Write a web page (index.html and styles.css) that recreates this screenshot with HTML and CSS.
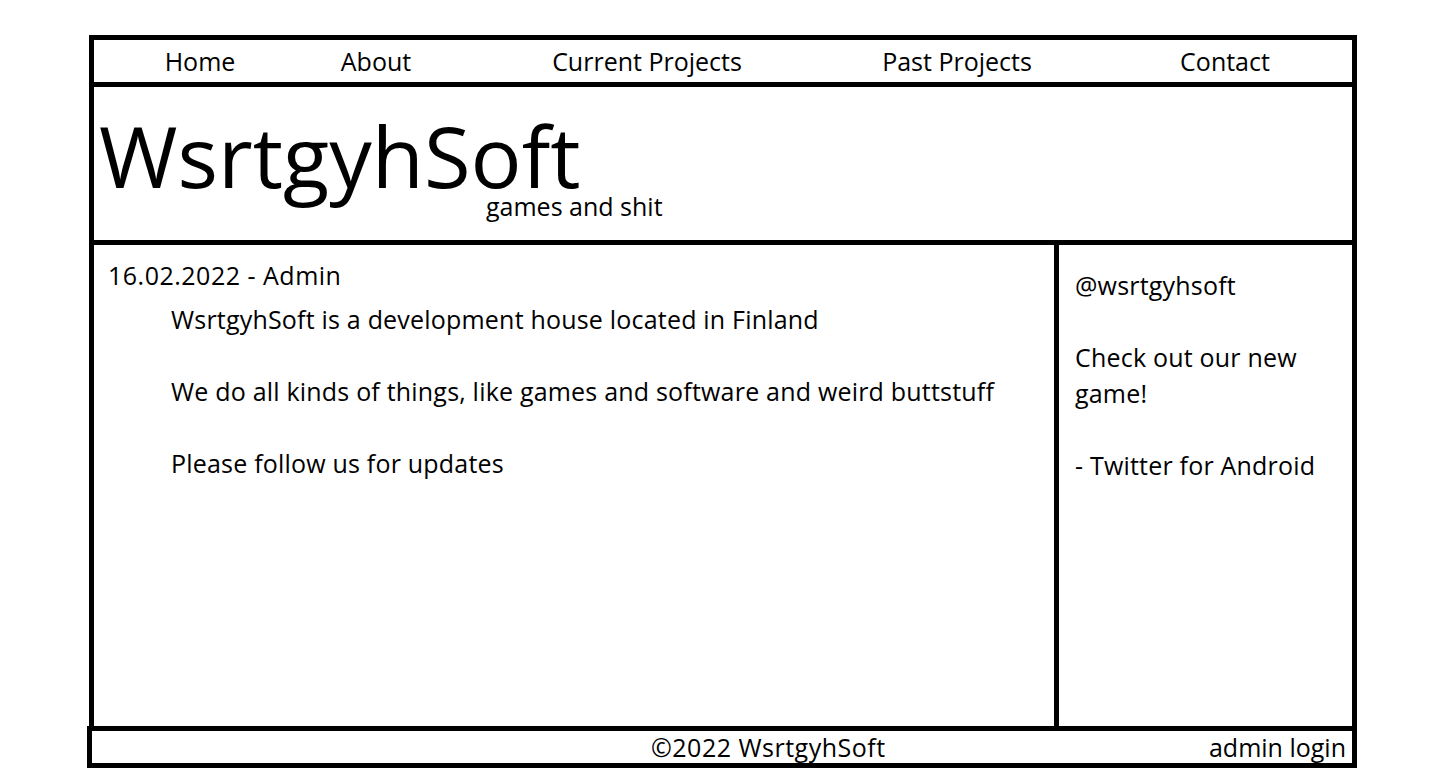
FILE: index.html
```html
<!DOCTYPE html>
<html>
<head>
<meta charset="utf-8">
<title>WsrtgyhSoft</title>
<link rel="stylesheet" href="styles.css">
</head>
<body>
<div class="page">
  <nav class="nav">
    <a class="nav-item" href="#">Home</a>
    <a class="nav-item" href="#">About</a>
    <a class="nav-item" href="#">Current Projects</a>
    <a class="nav-item" href="#">Past Projects</a>
    <a class="nav-item last" href="#">Contact</a>
  </nav>
  <header class="header">
    <h1 class="title">WsrtgyhSoft</h1>
    <div class="tagline">games and shit</div>
  </header>
  <main class="main">
    <section class="content">
      <div class="post-meta">16.02.2022 - Admin</div>
      <div class="post-body">
        <p>WsrtgyhSoft is a development house located in Finland</p>
        <p>We do all kinds of things, like games and software and weird buttstuff</p>
        <p>Please follow us for updates</p>
      </div>
    </section>
    <aside class="sidebar">
      <p>@wsrtgyhsoft</p>
      <p>Check out our new game!</p>
      <p>- Twitter for Android</p>
    </aside>
  </main>
  <footer class="footer">
    <span class="copy">©2022 WsrtgyhSoft</span>
    <a class="admin" href="#">admin login</a>
  </footer>
</div>
</body>
</html>
```
FILE: styles.css
```css
html, body {
  margin: 0;
  padding: 0;
  background: #fff;
}
body {
  font-family: "Open Sans", "Noto Sans", sans-serif;
  color: #000;
  font-size: 25px;
}
a { color: #000; text-decoration: none; }
.page {
  margin: 35px 0 0 89px;
  width: 1268px;
}
.nav {
  border: 5px solid #000;
  height: 42px;
  display: grid;
  grid-template-columns: 212px 140px 402px 218px 1fr;
  align-items: center;
}
.nav-item { text-align: center; }
.nav-item.last { padding-left: 32px; }
.header {
  border: 5px solid #000;
  border-top: 0;
  height: 153px;
}
.title {
  margin: 0;
  font-weight: 400;
  font-size: 85px;
  line-height: 70px;
  padding: 33px 0 0 5px;
}
.tagline {
  margin: 2px 0 0 392px;
  line-height: 28px;
}
.main {
  border: 5px solid #000;
  border-top: 0;
  border-bottom: 0;
  display: flex;
  height: 481px;
  letter-spacing: 0.2px;
}
.content {
  flex: 1;
  padding: 14px 0 0 14px;
}
.post-meta { line-height: 32px; letter-spacing: 0.5px; }
.post-body { padding-left: 63px; margin-top: 10px; }
.post-body p, .sidebar p { margin: 0 0 36px; line-height: 36px; }
.sidebar {
  width: 298px;
  border-left: 5px solid #000;
  padding: 22px 0 0 16px;
  box-sizing: border-box;
}
.footer {
  border: 5px solid #000;
  margin-left: -2px;
  height: 32px;
  display: flex;
  align-items: center;
  padding-left: 559px;
  padding-right: 6px;
}
.copy { flex: 1; letter-spacing: 0.5px; }
```
